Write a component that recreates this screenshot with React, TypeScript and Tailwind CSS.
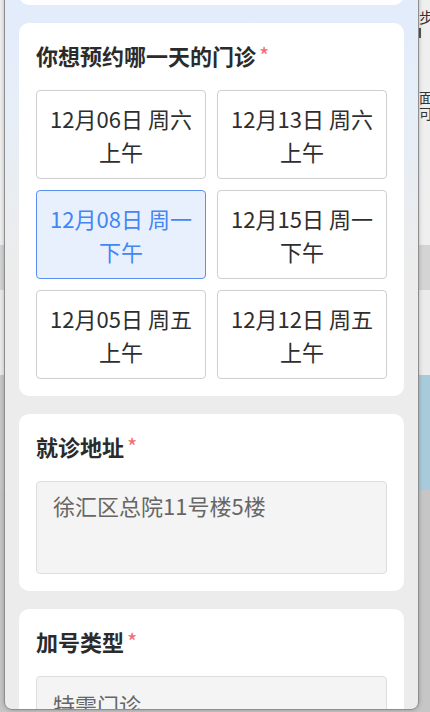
import React from "react";

const dates = [
  { d: "12月06日 周六", t: "上午" },
  { d: "12月13日 周六", t: "上午" },
  { d: "12月08日 周一", t: "下午", active: true },
  { d: "12月15日 周一", t: "下午" },
  { d: "12月05日 周五", t: "上午" },
  { d: "12月12日 周五", t: "上午" },
];

function Title({ text }: { text: string }) {
  return (
    <div className="flex items-start h-[28px] leading-[28px] text-[22px] font-bold text-[#2b2b2b] mb-[21px]">
      <span>{text}</span>
      <span className="ml-[3px] text-[#f56c6c] font-normal text-[22px] leading-[26px]">*</span>
    </div>
  );
}

export default function App() {
  return (
    <div
      className="relative w-[430px] h-[712px] overflow-hidden bg-[#c6c6c6]"
      style={{ fontFamily: '"Noto Sans CJK SC", "Noto Sans", sans-serif' }}
    >
      {/* background page (dimmed) */}
      <div className="flex flex-col w-full">
        <div className="h-[245px] bg-[#efefef] flex flex-col pl-[419px] text-[15px] text-[#333] leading-[17px]">
          <div className="pt-[8px]">步</div>
          <div className="mt-[3px] w-[2px] h-[10px] bg-[#555]"></div>
          <div className="mt-[52px] text-[14px] leading-[15px]">面</div>
          <div className="mt-[1px] text-[14px] leading-[15px]">可</div>
        </div>
        <div className="h-[45px] bg-[#d4d4d4]"></div>
        <div className="h-[85px] bg-[#ebebeb]"></div>
        <div className="h-[115px] bg-[#ebebeb] flex">
          <div className="w-[418px] bg-[#c8c8c8]"></div>
          <div className="flex-1 bg-[#a8cbdc]"></div>
        </div>
        <div className="h-[222px] bg-[#c6c6c6]"></div>
      </div>

      {/* overlay panel */}
      <div className="absolute left-[4px] top-[-20px] w-[415px] h-[730px] overflow-hidden rounded-b-[8px] border border-[#8e8e8e] shadow-[0_0_4px_rgba(0,0,0,0.25)] bg-[linear-gradient(180deg,#e1ecfb_0px,#e6eef8_120px,#ececec_290px,#ececec_100%)]">
        <div className="flex flex-col gap-[18px] px-[14px]">
          <div className="h-[24px] bg-white rounded-b-[10px]"></div>

          <div className="bg-white rounded-[10px] px-[17px] pt-[18px] pb-[17px]">
            <Title text="你想预约哪一天的门诊" />
            <div className="grid grid-cols-2 gap-x-[11px] gap-y-[11px]">
              {dates.map((x, i) => (
                <div
                  key={i}
                  className={
                    "h-[89px] flex flex-col items-center justify-center rounded-[4px] border text-[22px] leading-[33px] " +
                    (x.active
                      ? "bg-[#e8f0fd] border-[#5b8ff0] text-[#4386f4]"
                      : "bg-white border-[#cfcfcf] text-[#2e2e2e]")
                  }
                >
                  <div>{x.d}</div>
                  <div>{x.t}</div>
                </div>
              ))}
            </div>
          </div>

          <div className="bg-white rounded-[10px] px-[17px] pt-[18px] pb-[17px]">
            <Title text="就诊地址" />
            <div className="h-[93px] rounded-[4px] border border-[#dedede] bg-[#f4f4f4] px-[16px] pt-[8px] text-[22px] leading-[30px] text-[#666]">
              徐汇区总院11号楼5楼
            </div>
          </div>

          <div className="bg-white rounded-[10px] px-[17px] pt-[18px] pb-[17px]">
            <Title text="加号类型" />
            <div className="h-[56px] rounded-[4px] border border-[#dedede] bg-[#f4f4f4] px-[16px] pt-[12px] text-[22px] leading-[30px] text-[#666]">
              特需门诊
            </div>
          </div>
        </div>
      </div>
    </div>
  );
}
